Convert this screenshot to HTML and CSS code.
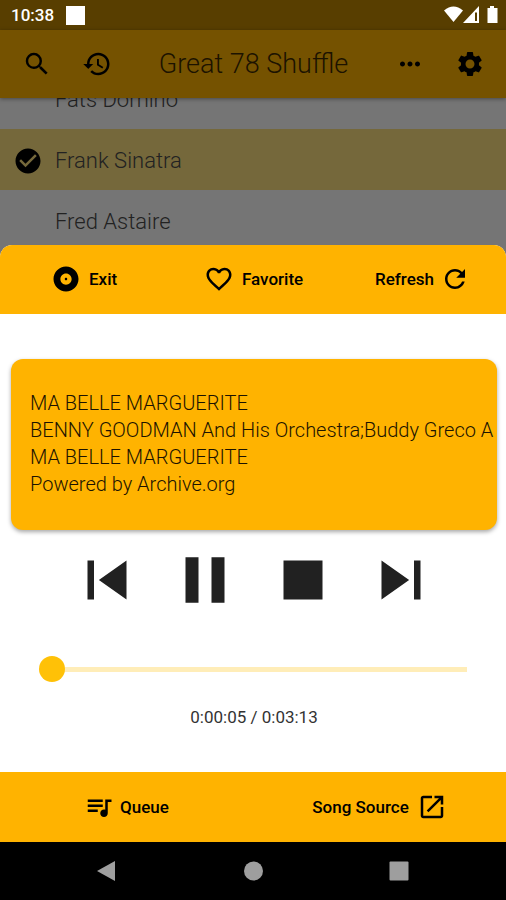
FILE: index.html
```html
<!DOCTYPE html>
<html lang="en">
<head>
<meta charset="utf-8">
<meta name="viewport" content="width=device-width, initial-scale=1">
<title>Great 78 Shuffle</title>
<link rel="stylesheet" href="styles.css">
</head>
<body>
<div class="status">
  <span>10:38</span>
  <span class="status-note"></span>
  <svg class="status-icons" viewBox="0 0 56 20" aria-hidden="true">
    <path d="M0 5.500Q9.500-2.500 19 5.500L9.500 17z"/>
    <path fill-rule="evenodd" d="M35 1v17H19zM31 7.500v8.500h2V7.500z"/>
    <path d="M46 1h4v2h3.500v15h-10V3H46z"/>
  </svg>
</div>
<header class="appbar">
  <button class="bar-button" aria-label="Search"><svg class="icon" viewBox="0 0 24 24"><path d="M15.500 14h-.79l-.28-.27A6.471 6.471 0 0 0 16 9.500 6.500 6.500 0 1 0 9.500 16c1.610 0 3.090-.59 4.230-1.570l.27.28v.79l5 4.990L20.490 19l-4.990-5zm-6 0C7.010 14 5 11.990 5 9.500S7.010 5 9.500 5 14 7.010 14 9.500 11.990 14 9.500 14z"/></svg></button>
  <button class="bar-button" aria-label="History"><svg class="icon" viewBox="0 0 24 24"><path d="M13 3c-4.970 0-9 4.030-9 9H1l3.890 3.890.07.14L9 12H6c0-3.870 3.130-7 7-7s7 3.130 7 7-3.130 7-7 7c-1.930 0-3.680-.79-4.940-2.060l-1.420 1.420C8.270 19.990 10.510 21 13 21c4.970 0 9-4.030 9-9s-4.030-9-9-9zm-1 5v5l4.280 2.540.72-1.210-3.500-2.080V8H12z"/></svg></button>
  <h1 class="title">Great 78 Shuffle</h1>
  <button class="bar-button" aria-label="More"><svg class="icon" viewBox="0 0 24 24"><path d="M6 10c-1.100 0-2 .9-2 2s.9 2 2 2 2-.9 2-2-.9-2-2-2zm12 0c-1.100 0-2 .9-2 2s.9 2 2 2 2-.9 2-2-.9-2-2-2zm-6 0c-1.100 0-2 .9-2 2s.9 2 2 2 2-.9 2-2-.9-2-2-2z"/></svg></button>
  <button class="bar-button" aria-label="Settings"><svg class="icon" viewBox="0 0 24 24"><path d="M19.140 12.940c.04-.3.06-.61.06-.94 0-.32-.02-.64-.07-.94l2.030-1.580c.18-.14.23-.41.12-.61l-1.920-3.320c-.12-.22-.37-.29-.59-.22l-2.390.96c-.5-.38-1.030-.7-1.620-.94l-.36-2.540c-.04-.24-.24-.41-.48-.41h-3.840c-.24 0-.43.17-.47.41l-.36 2.540c-.59.24-1.130.57-1.620.94l-2.390-.96c-.22-.08-.47 0-.59.22L2.740 8.870c-.12.21-.08.47.12.61l2.030 1.580c-.05.3-.09.63-.09.94s.02.64.07.94l-2.030 1.580c-.18.14-.23.41-.12.61l1.920 3.320c.12.22.37.29.59.22l2.390-.96c.5.38 1.030.7 1.620.94l.36 2.540c.05.24.24.41.48.41h3.840c.24 0 .44-.17.47-.41l.36-2.540c.59-.24 1.130-.56 1.620-.94l2.390.96c.22.08.47 0 .59-.22l1.920-3.320c.12-.22.07-.47-.12-.61l-2.010-1.580zM12 15.600c-1.980 0-3.600-1.620-3.600-3.600s1.620-3.600 3.600-3.600 3.600 1.620 3.600 3.600-1.620 3.600-3.600 3.600z"/></svg></button>
</header>
<main class="artists">
  <button class="artist">Fats Domino</button>
  <button class="artist selected" aria-pressed="true"><svg class="icon" viewBox="0 0 24 24"><path d="M12 2C6.480 2 2 6.480 2 12s4.480 10 10 10 10-4.480 10-10S17.520 2 12 2zm-2 15l-5-5 1.410-1.410L10 14.170l7.590-7.590L19 8l-9 9z"/></svg>Frank Sinatra</button>
  <button class="artist">Fred Astaire</button>
</main>
<section class="sheet" aria-label="Player">
  <div class="actions">
    <button class="action padded"><svg class="icon" viewBox="0 0 24 24"><path d="M12 2C6.480 2 2 6.480 2 12s4.480 10 10 10 10-4.480 10-10S17.520 2 12 2zm0 14.500c-2.490 0-4.500-2.010-4.500-4.500S9.510 7.500 12 7.500s4.500 2.010 4.500 4.500-2.010 4.500-4.500 4.500zm0-5.500c-.55 0-1 .45-1 1s.45 1 1 1 1-.45 1-1-.45-1-1-1z"/></svg>Exit</button>
    <button class="action padded"><svg class="icon" viewBox="0 0 24 24"><path d="M16.500 3c-1.740 0-3.410.81-4.500 2.090C10.910 3.810 9.240 3 7.500 3 4.420 3 2 5.420 2 8.500c0 3.780 3.400 6.860 8.550 11.540L12 21.350l1.450-1.320C18.600 15.360 22 12.280 22 8.500 22 5.420 19.580 3 16.500 3zm-4.400 15.550l-.1.1-.1-.1C7.140 14.240 4 11.390 4 8.500 4 6.500 5.500 5 7.500 5c1.540 0 3.040.99 3.570 2.360h1.870C13.460 5.990 14.960 5 16.500 5c2 0 3.500 1.500 3.500 3.500 0 2.890-3.140 5.740-7.900 10.050z"/></svg>Favorite</button>
    <button class="action tight">Refresh<svg class="icon" viewBox="0 0 24 24"><path d="M17.650 6.350C16.200 4.900 14.210 4 12 4c-4.420 0-7.990 3.580-7.990 8s3.570 8 7.990 8c3.730 0 6.840-2.550 7.730-6h-2.080c-.82 2.330-3.040 4-5.650 4-3.310 0-6-2.690-6-6s2.690-6 6-6c1.660 0 3.140.69 4.220 1.780L13 11h7V4l-2.350 2.350z"/></svg></button>
  </div>
  <div class="player">
    <div class="card">
      <p>MA BELLE MARGUERITE</p>
      <p>BENNY GOODMAN And His Orchestra;Buddy Greco A</p>
      <p>MA BELLE MARGUERITE</p>
      <p>Powered by Archive.org</p>
    </div>
    <div class="controls">
      <button class="control" aria-label="Previous"><svg viewBox="0 0 24 24"><path d="M6 6h2v12H6zm3.500 6l8.500 6V6z"/></svg></button>
      <button class="control" aria-label="Pause"><svg viewBox="0 0 24 24"><path d="M6 19h4V5H6v14zm8-14v14h4V5h-4z"/></svg></button>
      <button class="control" aria-label="Stop"><svg viewBox="0 0 24 24"><path d="M6 6h12v12H6z"/></svg></button>
      <button class="control" aria-label="Next"><svg viewBox="0 0 24 24"><path d="M6 18l8.500-6L6 6v12zM16 6v12h2V6h-2z"/></svg></button>
    </div>
    <input class="seek" type="range" min="0" max="193" value="0" aria-label="Position">
    <p class="time">0:00:05 / 0:03:13</p>
  </div>
  <div class="links">
    <button class="action tight"><svg class="icon" viewBox="0 0 24 24"><path d="M15 6H3v2h12V6zm0 4H3v2h12v-2zM3 16h8v-2H3v2zM17 6v8.180c-.31-.11-.65-.18-1-.18-1.660 0-3 1.340-3 3s1.340 3 3 3 3-1.340 3-3V8h3V6h-5z"/></svg>Queue</button>
    <button class="action">Song Source<svg class="icon" viewBox="0 0 24 24"><path d="M19 19H5V5h7V3H5c-1.110 0-2 .9-2 2v14c0 1.100.89 2 2 2h14c1.100 0 2-.9 2-2v-7h-2v7zM14 3v2h3.590l-9.830 9.830 1.410 1.410L19 6.410V10h2V3h-7z"/></svg></button>
  </div>
</section>
<nav class="system">
  <button class="system-button" aria-label="Back"><svg viewBox="0 0 20 20"><path d="M0 10L18 0v20z"/></svg></button>
  <button class="system-button" aria-label="Home"><svg viewBox="0 0 20 20"><circle cx="10.500" cy="10" r="9.500"/></svg></button>
  <button class="system-button" aria-label="Recents"><svg viewBox="0 0 20 20"><rect x="0.500" y="0.500" width="19" height="19" rx="1"/></svg></button>
</nav>
</body>
</html>
```
FILE: styles.css
```css
* {
  box-sizing: border-box;
}

body {
  margin: 0;
  min-height: 100vh;
  display: flex;
  flex-direction: column;
  background: #757575;
  color: #000;
  font-family: Roboto, "Noto Sans", sans-serif;
}

h1,
p {
  margin: 0;
}

button {
  display: flex;
  align-items: center;
  margin: 0;
  padding: 0;
  border: 0;
  background: none;
  color: inherit;
  font: inherit;
}

svg {
  display: block;
  flex: none;
  fill: currentColor;
}

.icon {
  width: 30px;
  height: 30px;
}

.status {
  display: flex;
  align-items: center;
  gap: 12px;
  height: 30px;
  padding: 0 6px 0 11px;
  background: #583e00;
  color: #fff;
  font-size: 17px;
  font-weight: 500;
}

.status-note {
  width: 19px;
  height: 19px;
  background: #fff;
}

.status-icons {
  width: 56px;
  height: 20px;
  margin-left: auto;
}

.appbar {
  position: relative;
  display: flex;
  align-items: center;
  height: 68px;
  padding: 0 6px 0 7px;
  background: #755200;
  box-shadow: 0 1px 4px rgba(0, 0, 0, 0.4);
}

.bar-button {
  justify-content: center;
  width: 60px;
  height: 60px;
}

.title {
  flex: 1;
  color: #1c1300;
  font-size: 27px;
  font-weight: 300;
  text-align: center;
  white-space: nowrap;
}

.artists {
  flex: 1;
  display: flex;
  flex-direction: column;
  justify-content: flex-end;
  min-height: 0;
  overflow: hidden;
}

.artist {
  flex: none;
  gap: 12px;
  height: 61px;
  padding: 2px 13px 0 55px;
  color: #222;
  font-size: 22px;
  font-weight: 300;
  text-align: left;
}

.artist:first-child {
  margin-top: -30px;
}

.artist.selected {
  padding-left: 13px;
  background: #75683b;
}

.selected .icon {
  fill: #000;
}

.sheet {
  position: relative;
  margin-top: -6px;
  overflow: hidden;
  border-radius: 12px 12px 0 0;
  background: #fff;
}

.actions,
.links {
  background: #ffb300;
  font-size: 17px;
  font-weight: 500;
}

.actions {
  display: flex;
  justify-content: space-between;
  height: 69px;
  padding: 0 36px 2px;
}

.links {
  display: grid;
  grid-template-columns: 1fr 1fr;
  justify-items: center;
  height: 70px;
}

.action {
  gap: 8px;
}

.action.padded {
  padding: 0 20px 0 15px;
}

.action.tight {
  gap: 6px;
}

.player {
  display: flex;
  flex-direction: column;
  padding: 45px 9px 45px 11px;
}

.card {
  overflow: hidden;
  padding: 31px 0 32px 19px;
  border-radius: 12px;
  background: #ffb300;
  box-shadow: 0 2px 4px rgba(0, 0, 0, 0.35);
  color: #1c1300;
  font-size: 20px;
  font-weight: 300;
  line-height: 27px;
  white-space: nowrap;
}

.controls {
  display: flex;
  justify-content: center;
  gap: 20px;
  margin-top: 11px;
  color: #212121;
}

.control svg {
  width: 78px;
  height: 78px;
}

.seek {
  appearance: none;
  height: 26px;
  margin: 37px 17px 0 28px;
  background: linear-gradient(#ffedb8, #ffedb8) center / calc(100% - 26px) 5px no-repeat;
}

.seek::-webkit-slider-thumb {
  appearance: none;
  width: 26px;
  height: 26px;
  border-radius: 50%;
  background: #ffc107;
}

.time {
  margin-top: 25px;
  color: #333;
  font-size: 17px;
  line-height: 20px;
  text-align: center;
}

.system {
  display: flex;
  justify-content: center;
  gap: 86px;
  height: 58px;
  background: #000;
  color: #9e9e9e;
}

.system-button {
  justify-content: center;
  width: 60px;
}

.system-button svg {
  width: 20px;
  height: 20px;
}
```
